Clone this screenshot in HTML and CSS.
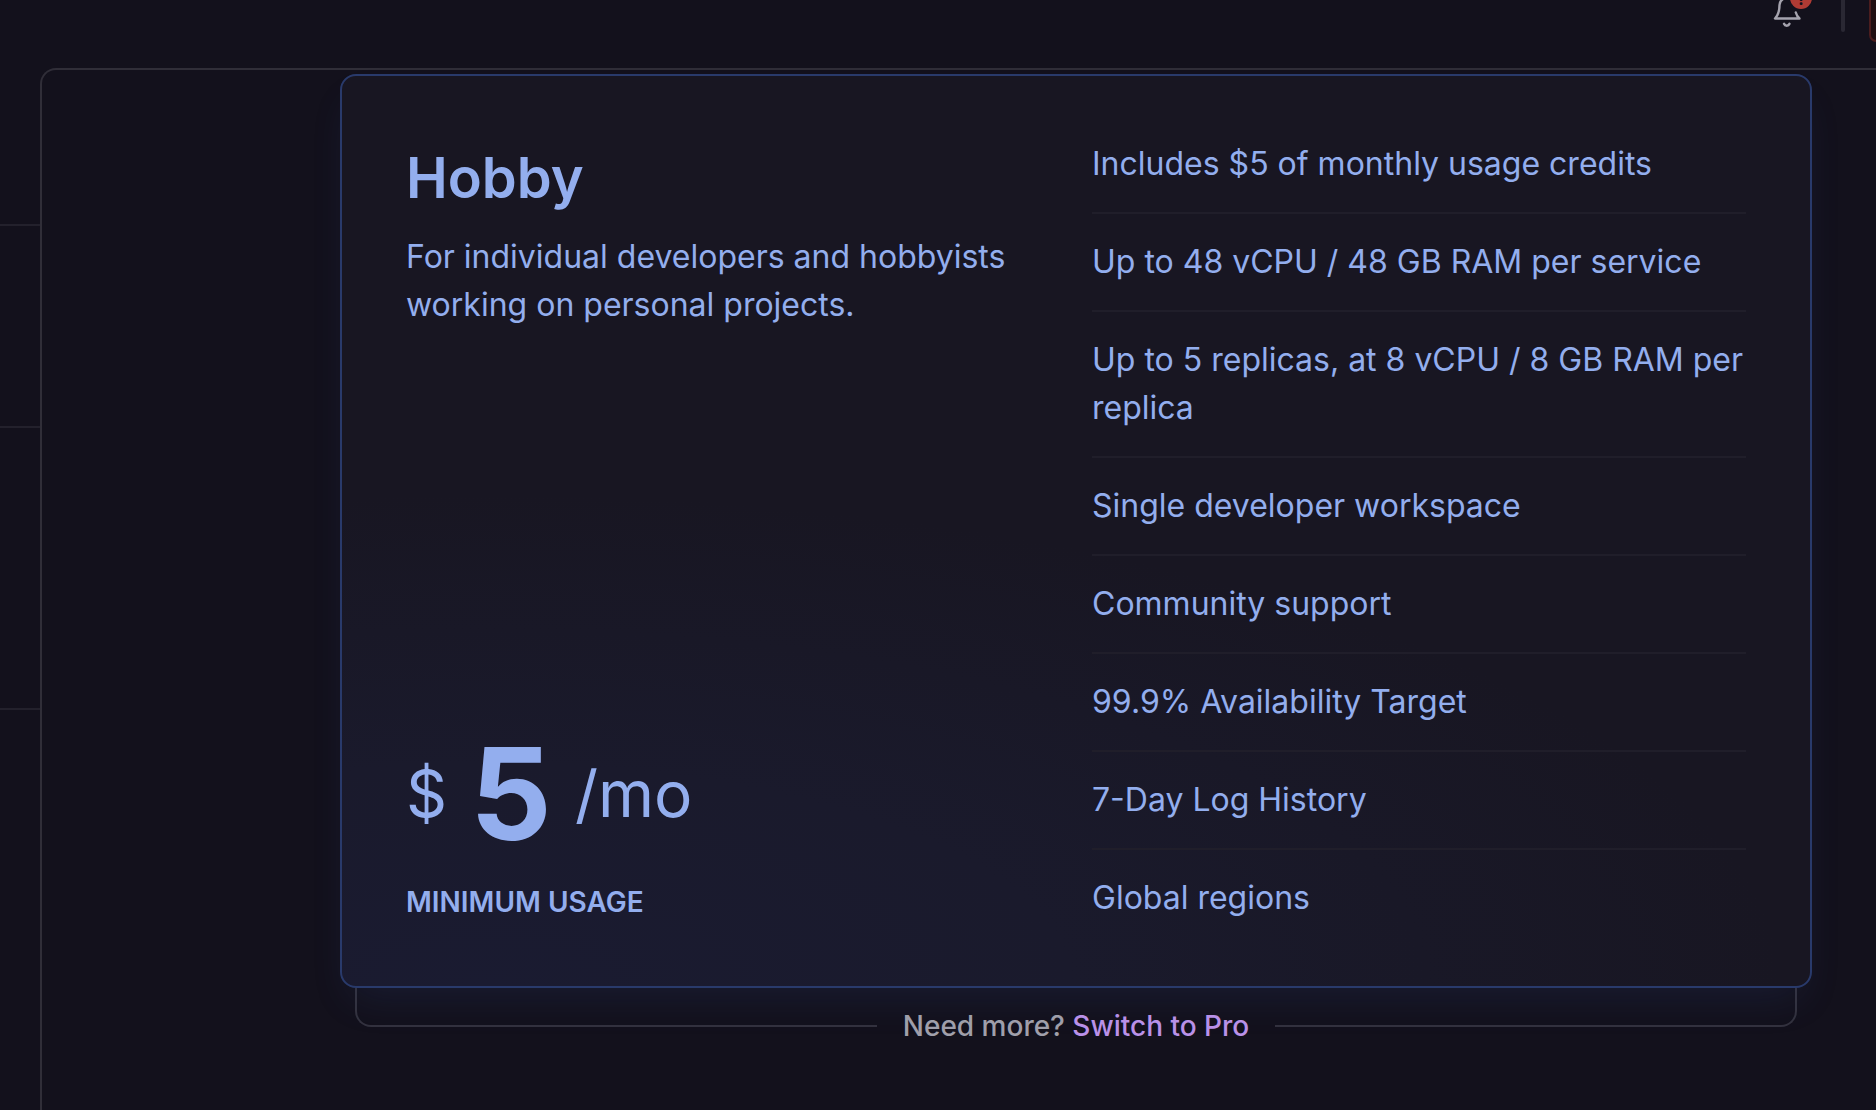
FILE: index.html
```html
<!DOCTYPE html>
<html lang="en">
<head>
  <meta charset="UTF-8" />
  <meta name="viewport" content="width=device-width, initial-scale=1.0"/>
  <title>Plans</title>
  <link rel="stylesheet" href="styles.css">
</head>
<body>

  <!-- Top bar -->
  <header class="topbar">
    <button class="bell" aria-label="Notifications">
      <svg width="32" height="44" viewBox="0 0 32 44" fill="none" stroke="#a5a3ae" stroke-width="2.400" stroke-linecap="round" stroke-linejoin="round">
        <path d="M20 -2 C14 -3 9 -1 8.500 5 C8.500 10 7.500 15 4 18.500 H28.500 C26.500 17 25.500 15 24.800 12.500"/>
        <path d="M13 23.800 C14 26.300 17.500 26.300 18.500 23.800"/>
      </svg>
      <span class="badge">!</span>
    </button>
    <span class="divider"></span>
    <button class="alert" aria-label="Account status"></button>
  </header>

  <div class="layout">
    <!-- Side rail -->
    <aside class="rail">
      <div class="rail-item rail-first"></div>
      <div class="rail-item rail-second"></div>
      <div class="rail-item rail-third"></div>
    </aside>

    <main class="panel">
      <section class="plan">
        <div class="plan-info">
          <h1>Hobby</h1>
          <p class="description">For individual developers and hobbyists working on personal projects.</p>
          <div class="price">
            <span class="unit">$</span>
            <span class="amount">5</span>
            <span class="unit">/mo</span>
          </div>
          <p class="minimum">Minimum usage</p>
        </div>
        <ul class="features">
          <li>Includes $5 of monthly usage credits</li>
          <li>Up to 48 vCPU / 48 GB RAM per service</li>
          <li>Up to 5 replicas, at 8 vCPU / 8 GB RAM per replica</li>
          <li>Single developer workspace</li>
          <li>Community support</li>
          <li>99.9% Availability Target</li>
          <li>7-Day Log History</li>
          <li>Global regions</li>
        </ul>
      </section>

      <!-- Bracket hanging under the plan -->
      <div class="upgrade">
        <span class="bracket bracket-left"></span>
        <p>Need more? <a href="#">Switch to Pro</a></p>
        <span class="bracket bracket-right"></span>
      </div>
    </main>
  </div>

</body>
</html>
```
FILE: styles.css
```css
* {
  box-sizing: border-box;
}
body {
  margin: 0;
  min-height: 100vh;
  display: flex;
  flex-direction: column;
  overflow: hidden;
  font-family: Inter, sans-serif;
  background: #13111c;
  color: #93aeee;
}
h1, p, ul {
  margin: 0;
  padding: 0;
}
button {
  padding: 0;
  border: none;
  background: none;
  font-family: inherit;
}

/* ==== Top bar ==== */
.topbar {
  display: flex;
  justify-content: flex-end;
  align-items: flex-start;
  height: 68px;
}
.bell {
  position: relative;
  width: 32px;
  height: 44px;
  margin-right: 38px;
}
.bell svg {
  display: block;
}
.badge {
  position: absolute;
  top: -13px;
  left: 19px;
  width: 22px;
  height: 22px;
  border-radius: 50%;
  background: #b03b34;
  color: #13111c;
  font-size: 16px;
  line-height: 24px;
  font-weight: 700;
  text-align: center;
}
.divider {
  width: 4px;
  height: 32px;
  margin-right: 24px;
  border-radius: 0 0 2px 2px;
  background: #2a2833;
}
.alert {
  width: 7px;
  height: 42px;
  border: 2px solid #4b1d1e;
  border-top: none;
  border-right: none;
  border-radius: 0 0 0 12px;
  background: #200f12;
}

/* ==== Layout ==== */
.layout {
  flex: 1;
  display: flex;
}
.rail {
  width: 40px;
}
.rail-item {
  border-bottom: 2px solid #23212c;
}
.rail-first {
  height: 158px;
}
.rail-second {
  height: 202px;
}
.rail-third {
  height: 282px;
}
.panel {
  flex: 1;
  padding: 4px 64px 0 298px;
  border: 2px solid #302e38;
  border-right: none;
  border-bottom: none;
  border-radius: 16px 0 0 0;
}

/* ==== Plan ==== */
.plan {
  position: relative;
  display: grid;
  grid-template-columns: 1fr 1fr;
  gap: 32px;
  padding: 64px;
  border: 2px solid #293a6b;
  border-radius: 16px;
  background: radial-gradient(ellipse 88% 54% at 10% 100%, #1a1b31 0%, #1a1a2c 45%, #181622 100%);
  box-shadow: 0 20px 40px -12px rgba(58, 84, 170, 0.16);
}
.plan-info {
  display: flex;
  flex-direction: column;
}
h1 {
  margin-bottom: 17px;
  font-size: 56px;
  line-height: 76px;
  font-weight: 600;
}
.description {
  font-size: 32px;
  line-height: 48px;
}
.price {
  display: flex;
  align-items: center;
  gap: 23px;
  margin-top: auto;
  margin-bottom: 24px;
}
.unit {
  font-size: 64px;
  line-height: 80px;
}
.amount {
  font-size: 128px;
  line-height: 128px;
  font-weight: 700;
}
.minimum {
  font-size: 28px;
  line-height: 40px;
  font-weight: 600;
  text-transform: uppercase;
}
.features {
  list-style: none;
  font-size: 32px;
  line-height: 48px;
}
.features li {
  padding: 24px 0;
  border-bottom: 2px solid #201e2a;
}
.features li:first-child {
  padding-top: 0;
}
.features li:last-child {
  padding-bottom: 0;
  border-bottom: none;
}

/* ==== Upgrade ==== */
.upgrade {
  display: flex;
  align-items: flex-start;
  margin: 0 15px;
}
.upgrade p {
  padding: 18px 26px 0;
  font-size: 28px;
  line-height: 40px;
  font-weight: 500;
  color: #a1a0ab;
}
.upgrade a {
  color: #bb92e9;
  text-decoration: none;
}
.bracket {
  flex: 1;
  height: 39px;
  border-bottom: 2px solid #33323e;
}
.bracket-left {
  border-left: 2px solid #33323e;
  border-radius: 0 0 0 16px;
}
.bracket-right {
  border-right: 2px solid #33323e;
  border-radius: 0 0 16px 0;
}
```
